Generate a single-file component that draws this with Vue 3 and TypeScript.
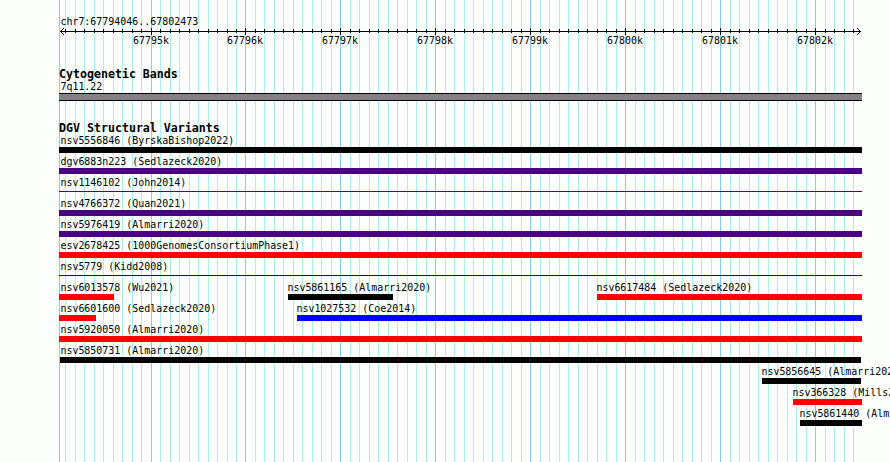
<script setup lang="ts">
interface Feature {
  name: string
  start: number
  end: number
  color: string
  thin?: boolean
}

const regionStart = 67794046
const regionEnd = 67802473
const left = 60
const span = 800
const toX = (bp: number): number =>
  Math.round(left + ((bp - regionStart) * span) / (regionEnd - regionStart))

const ticks: { x: number; major: boolean; label: string }[] = []
for (let bp = 67794100; bp <= 67802400; bp += 100) {
  ticks.push({ x: toX(bp), major: bp % 1000 === 0, label: `${bp / 1000}k` })
}
const minorTicks = ticks.filter((t) => !t.major)
const majorTicks = ticks.filter((t) => t.major)

const red = '#ff0000'
const black = '#000000'
const purple = '#4b0082'
const blue = '#0000ff'

const rows: Feature[][] = [
  [{ name: 'nsv5556846 (ByrskaBishop2022)', start: 59, end: 862, color: black }],
  [{ name: 'dgv6883n223 (Sedlazeck2020)', start: 59, end: 862, color: purple }],
  [{ name: 'nsv1146102 (John2014)', start: 59, end: 862, color: purple, thin: true }],
  [{ name: 'nsv4766372 (Quan2021)', start: 59, end: 862, color: purple }],
  [{ name: 'nsv5976419 (Almarri2020)', start: 59, end: 862, color: purple }],
  [{ name: 'esv2678425 (1000GenomesConsortiumPhase1)', start: 59, end: 862, color: red }],
  [{ name: 'nsv5779 (Kidd2008)', start: 59, end: 862, color: '#0000cd', thin: true }],
  [
    { name: 'nsv6013578 (Wu2021)', start: 59, end: 114, color: red },
    { name: 'nsv5861165 (Almarri2020)', start: 288, end: 393, color: black },
    { name: 'nsv6617484 (Sedlazeck2020)', start: 597, end: 862, color: red },
  ],
  [
    { name: 'nsv6601600 (Sedlazeck2020)', start: 59, end: 96, color: red },
    { name: 'nsv1027532 (Coe2014)', start: 297, end: 862, color: blue },
  ],
  [{ name: 'nsv5920050 (Almarri2020)', start: 59, end: 862, color: red }],
  [{ name: 'nsv5850731 (Almarri2020)', start: 60, end: 861, color: black }],
  [{ name: 'nsv5856645 (Almarri2020)', start: 762, end: 861, color: black }],
  [{ name: 'nsv366328 (Mills2006)', start: 793, end: 862, color: red }],
  [{ name: 'nsv5861440 (Almarri2020)', start: 800, end: 862, color: black }],
]

const labelX = (f: Feature): number => (f.start < 61 ? 60 : f.start - 1)

// Features share a row, so each one is offset from the end of the one before it.
const gapBefore = (row: Feature[], i: number): number =>
  row[i].start - (i === 0 ? 0 : row[i - 1].end)
</script>

<template>
  <main class="browser">
    <svg class="grid" width="890" height="462" shape-rendering="crispEdges">
      <rect v-for="t in minorTicks" :key="t.x" class="minor" :x="t.x" y="0" width="1" height="462" />
      <rect v-for="t in majorTicks" :key="t.x" class="major" :x="t.x" y="0" width="1" height="462" />
      <rect class="major" x="59" y="0" width="1" height="462" />
    </svg>

    <section class="content">
      <header class="region"><span class="text">chr7:67794046..67802473</span></header>
      <svg class="ruler" width="890" height="20" shape-rendering="crispEdges">
        <rect x="60" y="4" width="801" height="1" />
        <rect v-for="t in minorTicks" :key="t.x" :x="t.x" y="2" width="1" height="4" />
        <rect v-for="t in majorTicks" :key="t.x" :x="t.x" y="1" width="1" height="7" />
        <path d="M61 3h1v3h-1zM62 2h1v1h-1zM62 6h1v1h-1zM63 1h1v1h-1zM63 7h1v1h-1z" />
        <path d="M859 3h1v3h-1zM858 2h1v1h-1zM858 6h1v1h-1zM857 1h1v1h-1zM857 7h1v1h-1z" />
        <text v-for="t in majorTicks" :key="t.label" class="tick" :transform="`translate(${t.x - 18} 17) scale(1 1.12)`">{{ t.label }}</text>
      </svg>

      <h2 class="bands-title"><span class="bold">Cytogenetic Bands</span></h2>
      <div class="band-label"><span class="text">7q11.22</span></div>
      <div class="band"></div>

      <h2 class="variants-title"><span class="bold">DGV Structural Variants</span></h2>
      <div v-for="(row, r) in rows" :key="r" class="row">
        <div
          v-for="(f, i) in row"
          :key="f.name"
          class="feature"
          :style="{ marginLeft: gapBefore(row, i) + 'px', width: f.end - f.start + 'px' }"
        >
          <span class="text" :style="{ marginLeft: labelX(f) - f.start + 'px' }">{{ f.name }}</span>
          <div class="bar" :class="{ thin: f.thin }" :style="{ backgroundColor: f.color }"></div>
        </div>
      </div>
    </section>
  </main>
</template>

<style>
body {
  margin: 0;
  background: #fdfffc;
}
</style>

<style scoped>
.browser {
  display: grid;
  width: 890px;
  height: 462px;
  overflow: hidden;
  background: #fdfffc;
  color: #000;
  font-family: 'DejaVu Sans Mono', monospace;
  font-size: 9.966px;
}
.grid,
.content {
  grid-area: 1 / 1;
  min-width: 0;
}
.grid {
  display: block;
}
.minor {
  fill: #afeeee;
}
.major {
  fill: #87ceeb;
}
.content {
  position: relative;
  display: flex;
  flex-direction: column;
  padding-top: 16px;
}
.text {
  display: block;
  height: 12px;
  line-height: 12px;
  white-space: pre;
  transform: translateX(0.4px) scaleY(1.12);
  transform-origin: 0 9px;
}
.region {
  height: 11px;
  padding-left: 60px;
}
.ruler {
  display: block;
  height: 20px;
}
.tick {
  font-size: 9.966px;
}
h2 {
  margin: 0;
  padding-left: 59px;
  font-weight: 700;
  font-size: 11.627px;
}
.bold {
  display: block;
  height: 14px;
  line-height: 14px;
  white-space: pre;
}
.bands-title {
  margin-top: 20px;
  height: 14px;
}
.band-label {
  height: 12px;
  padding-left: 60px;
}
.band {
  box-sizing: border-box;
  width: 803px;
  height: 8px;
  margin-left: 59px;
  border: solid #000;
  border-width: 1px 0;
  background: #848084;
}
.variants-title {
  margin-top: 20px;
  height: 14px;
}
.row {
  display: flex;
  height: 21px;
}
.feature {
  flex: none;
}
.bar {
  height: 6px;
}
.thin {
  height: 1px;
  margin-top: 2px;
}
</style>
